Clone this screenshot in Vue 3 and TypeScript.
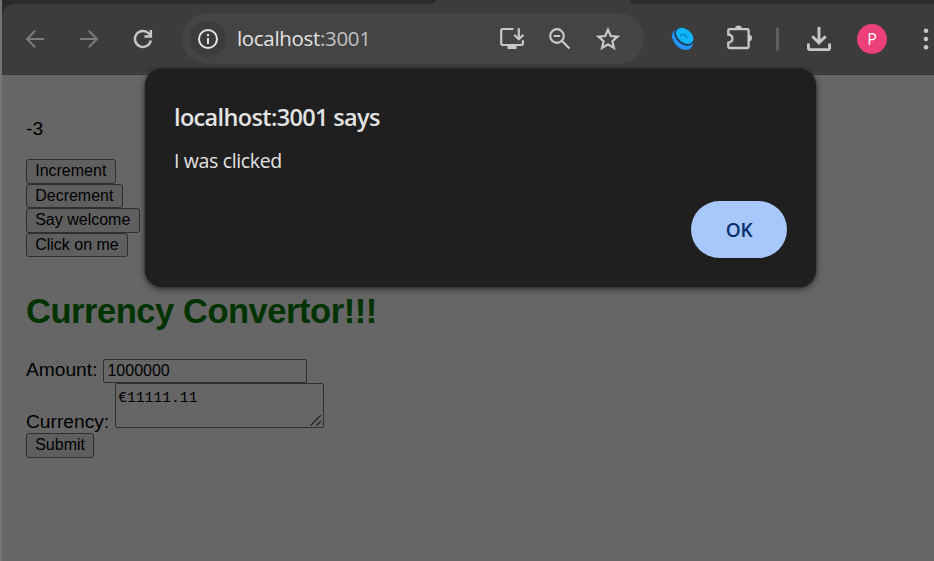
<script setup lang="ts">
import { ref } from 'vue'

const count = ref(-3)
const actions: string[] = ['Increment', 'Decrement', 'Say welcome', 'Click on me']
const amount = ref('1000000')
const converted = ref('€11111.11')
</script>

<template>
  <div class="window">
    <div class="tabstrip"><span class="before"></span><span class="after"></span></div>
    <header class="toolbar">
      <svg class="icon nav dim" viewBox="0 0 24 24"><path d="M21 12H4M12.2 3.8 4 12l8.2 8.2" /></svg>
      <svg class="icon nav dim" viewBox="0 0 24 24"><path d="M3 12h17M11.8 3.8 20 12l-8.2 8.2" /></svg>
      <svg class="icon nav reload" viewBox="0 0 24 24"><path d="M19.8 13.5A8 8 0 1 1 17.8 6.500L20 9M19.900 3v6.500h-6.500" /></svg>
      <div class="omnibox">
        <span class="site">
          <svg viewBox="0 0 24 24"><circle cx="12" cy="12" r="9" /><path d="M12 11v6M12 7v2.2" /></svg>
        </span>
        <span class="url">localhost<span class="port">:3001</span></span>
        <svg class="icon install" viewBox="0 0 24 24"><path d="M13.500 2H3Q1.200 2 1.200 3.700V16.300Q1.200 18 3 18H21.200Q22.900 18 22.900 16.300V13.200M18.800 1.200V12M14.200 7.700l4.600 4.600 4.600-4.600" /><path d="M7.500 17.500h9v4.500h-9z" class="solid" /></svg>
        <svg class="icon lens" viewBox="0 0 24 24"><circle cx="9" cy="9" r="6.800" /><path d="M14 14l7.500 7.500M5.800 9h6.400" /></svg>
        <svg class="icon star" viewBox="0 0 24 24"><path d="M12 2.600l2.700 6.400 6.900.6-5.200 4.600 1.500 6.700L12 17.300l-5.900 3.600 1.500-6.700-5.200-4.600 6.900-.6z" /></svg>
      </div>
      <svg class="icon ext" viewBox="0 0 24 24">
        <ellipse class="bowl" cx="11.500" cy="12.500" rx="12" ry="8.800" transform="rotate(43 11.500 12.500)" />
        <ellipse class="rim" cx="13" cy="9.800" rx="11" ry="7.300" transform="rotate(40 13 9.800)" />
        <path class="gap" d="M1.200 11.500c1.300 5 4.500 8.800 8.800 11" />
        <ellipse class="face" cx="13.700" cy="8.900" rx="9.800" ry="6.700" transform="rotate(40 13.700 8.900)" />
        <path class="swirl" d="M9 9.200c1.500-3.200 6-2 7.200 1.600" />
      </svg>
      <svg class="icon puzzle" viewBox="0 0 26 26"><path d="M3.700 5.200H21.200Q22.600 5.200 22.600 6.600V22.600Q22.600 24 21.200 24H3.700Q2.300 24 2.300 22.600V18.700C7.800 18 7.800 11.200 2.300 10.500V6.600Q2.300 5.200 3.700 5.200z" /><path class="solid" d="M9 5a3.500 3.500 0 0 1 7 0zM22.500 10.500a3.500 3.500 0 0 1 0 7z" /></svg>
      <span class="divider"></span>
      <svg class="icon download" viewBox="0 0 24 24"><path d="M12 0V15.500M5.300 9.200l6.700 6.700 6.700-6.700M1.400 16.500v4.600q0 1.500 1.500 1.500h18.200q1.500 0 1.500-1.500v-4.600" /></svg>
      <span class="avatar">P</span>
      <svg class="dots" viewBox="0 0 6 24"><circle cx="3" cy="3.700" r="2.300" /><circle cx="3" cy="12" r="2.300" /><circle cx="3" cy="20.300" r="2.300" /></svg>
    </header>
    <main class="page">
      <p class="count">{{ count }}</p>
      <div class="actions">
        <button v-for="label in actions" :key="label" type="button">{{ label }}</button>
      </div>
      <h1>Currency Convertor!!!</h1>
      <form @submit.prevent>
        <label class="row amount">Amount: <input v-model="amount" type="text" /></label>
        <label class="row currency">Currency:
          <span class="area">{{ converted }}<svg viewBox="0 0 12 12"><path d="M.5 11.500 11 1M6.500 11.500l4.500-4.500" /></svg></span>
        </label>
        <button type="submit">Submit</button>
      </form>
    </main>
    <section class="dialog" role="dialog">
      <h2>localhost:3001 says</h2>
      <p>I was clicked</p>
      <button type="button">OK</button>
    </section>
  </div>
</template>

<style>
body { margin: 0; background: #666; }
</style>

<style scoped>
* { box-sizing: border-box; }
.window {
  position: relative;
  width: 934px;
  height: 561px;
  overflow: hidden;
  border-left: 2px solid #757575;
  background: #2b2b2b;
  font-family: "Liberation Sans", Arial, sans-serif;
}
.tabstrip { display: flex; justify-content: space-between; height: 4px; background: #3c3c3c; }
.tabstrip span { background: #2b2b2b; }
.before { width: 434px; border-bottom-right-radius: 8px 4px; }
.after { width: 304px; border-bottom-left-radius: 8px 4px; }
.toolbar {
  display: flex;
  align-items: center;
  height: 71px;
  padding: 0 0 1px 21px;
  border-bottom: 1px solid #353535;
  border-radius: 12px 0 0 0;
  background: #3c3c3c;
  box-shadow: inset 0 -1px #444;
}
.icon { flex: none; width: 24px; height: 24px; fill: none; stroke: #c7c7c7; stroke-width: 2; }
.icon .solid { fill: #c7c7c7; stroke: none; }
.nav { margin-right: 30px; }
.reload { margin-right: 27px; stroke-width: 2.4; }
.dim { stroke: #7b7b7b; }
.omnibox {
  display: flex;
  flex: none;
  align-items: center;
  width: 462px;
  height: 51px;
  padding: 0 24px 0 8px;
  border-radius: 26px;
  background: #444;
}
.site {
  display: flex;
  align-items: center;
  justify-content: center;
  width: 36px;
  height: 36px;
  margin-right: 11px;
  border-radius: 50%;
  background: #3c3c3c;
}
.site svg { width: 24px; height: 24px; fill: none; stroke: #e3e3e3; stroke-width: 2; }
.url { flex: 1; padding-bottom: 2px; color: #e3e3e3; font: 20.5px/28px "Open Sans", sans-serif; letter-spacing: -0.32px; }
.port { color: #c0c0c0; }
.install, .lens, .star { stroke-width: 2.2; }
.lens, .star { margin-left: 24px; }
.ext { margin-left: 27px; stroke: none; }
.ext .bowl { fill: #2196fb; }
.ext .rim { fill: #26394a; }
.ext .face { fill: #10b5fb; }
.ext .gap { stroke: #303d4c; stroke-width: 1; }
.ext .swirl { stroke: #087bc0; stroke-width: 1.2; }
.puzzle { width: 26px; height: 26px; margin: -3px 1px 0 31px; stroke-width: 2.3; }
.divider { flex: none; width: 3px; height: 24px; margin: 0 28px 0 23px; border-radius: 2px; background: #5e5e5e; }
.download { stroke-width: 2.900; }
.avatar {
  display: flex;
  flex: none;
  align-items: center;
  justify-content: center;
  width: 30px;
  height: 30px;
  margin: 0 36px 0 26px;
  border-radius: 50%;
  background: #ec407a;
  color: #fff;
  font: 16px/30px "Open Sans", sans-serif;
}
.dots { flex: none; width: 6px; height: 24px; fill: #c7c7c7; }
.page { height: 486px; padding: 43px 24px 0; background: #666; color: #000; font-size: 19.2px; line-height: 22px; }
.count { margin: 0 0 19px; }
.actions { display: flex; flex-direction: column; align-items: flex-start; height: 98px; }
.page button {
  display: block;
  height: 24.5px;
  padding: 0 8.2px;
  border: 1px solid #2f2f2f;
  border-radius: 3px;
  background: #5f5f5f;
  color: #000;
  font: 16px/22px "Liberation Sans", Arial, sans-serif;
}
.page h1 { margin: 34px 0 28px; color: #030; font-size: 34.5px; line-height: 40px; letter-spacing: -0.46px; }
.row { display: flex; }
.amount { height: 24px; }
.amount input {
  width: 204px;
  height: 24px;
  margin: 0 0 0 5.5px;
  padding: 0 3.500px;
  border: 1px solid #2f2f2f;
  border-radius: 2px;
  background: #666;
  color: #000;
  font: 16px/20px "Liberation Sans", Arial, sans-serif;
}
.currency { align-items: flex-end; height: 50px; }
.area {
  position: relative;
  width: 209px;
  height: 45px;
  margin: 0 0 5px 6px;
  padding: 5px 2px 3px;
  border: 1px solid #2f2f2f;
  border-radius: 2px;
  font: 14.700px/18px "Liberation Mono", monospace;
}
.area svg { position: absolute; right: 1px; bottom: 1px; width: 12px; height: 12px; fill: none; stroke: #252525; stroke-width: 1.300; }
.dialog {
  position: absolute;
  top: 69px;
  left: 143px;
  display: flex;
  flex-direction: column;
  width: 671px;
  height: 218px;
  padding: 32px 29px 0;
  border-radius: 17px;
  background: #1f1f1f;
  box-shadow: 0 2px 7px rgba(0, 0, 0, 0.55), 0 0 2px rgba(0, 0, 0, 0.6);
  color: #e3e3e3;
  font-family: "Open Sans", sans-serif;
}
.dialog h2 { margin: 0; font-size: 23.5px; font-weight: 600; line-height: 32px; letter-spacing: -0.65px; }
.dialog p { margin: 13px 0 26px; font-size: 19.5px; line-height: 29px; letter-spacing: -0.35px; }
.dialog button {
  align-self: flex-end;
  width: 96px;
  height: 57px;
  padding: 2px 0 0;
  border: 0;
  border-radius: 29px;
  background: #a8c7fa;
  color: #062e6f;
  font: 600 19px/55px "Open Sans", sans-serif;
  letter-spacing: -0.3px;
}
</style>
